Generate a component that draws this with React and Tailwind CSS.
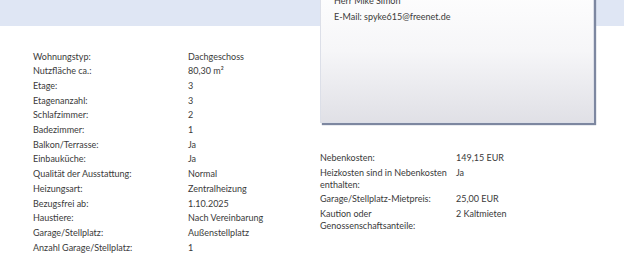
export default function App() {
  const left = [
    ["Wohnungstyp:", "Dachgeschoss"],
    ["Nutzfläche ca.:", "80,30 m²"],
    ["Etage:", "3"],
    ["Etagenanzahl:", "3"],
    ["Schlafzimmer:", "2"],
    ["Badezimmer:", "1"],
    ["Balkon/Terrasse:", "Ja"],
    ["Einbauküche:", "Ja"],
    ["Qualität der Ausstattung:", "Normal"],
    ["Heizungsart:", "Zentralheizung"],
    ["Bezugsfrei ab:", "1.10.2025"],
    ["Haustiere:", "Nach Vereinbarung"],
    ["Garage/Stellplatz:", "Außenstellplatz"],
    ["Anzahl Garage/Stellplatz:", "1"],
  ];
  const right = [
    ["Nebenkosten:", "149,15 EUR"],
    ["Heizkosten sind in Nebenkosten enthalten:", "Ja"],
    ["Garage/Stellplatz-Mietpreis:", "25,00 EUR"],
    ["Kaution oder Genossenschaftsanteile:", "2 Kaltmieten"],
  ];
  return (
    <div
      className="relative w-[624px] h-[260px] bg-white overflow-hidden text-[#3a3a3a] text-[9px]"
      style={{ fontFamily: 'Lato, "Liberation Sans", sans-serif' }}
    >
      <div className="absolute top-0 left-0 right-0 h-[26px] bg-[#dfe6f4]" />
      <div className="relative flex">
        <div className="w-[320px] pl-[33px] pt-[49.5px] flex flex-col">
          {left.map(([k, v]) => (
            <div key={k} className="flex leading-[14.7px]">
              <div className="w-[155px]">{k}</div>
              <div>{v}</div>
            </div>
          ))}
        </div>
        <div className="flex flex-col w-[274px]">
          <div className="mt-[-22px] h-[145px] border border-[#dcdfe8] bg-gradient-to-b from-white via-[#f6f6f8] to-[#e0e0e6] shadow-[2px_2px_1px_#7d87a0] px-[13px] pt-[14px] leading-[16px]">
            <div>Herr Mike Simon</div>
            <div>E-Mail: spyke615@freenet.de</div>
          </div>
          <div className="mt-[28px] flex flex-col">
            {right.map(([k, v]) => (
              <div key={k} className="flex leading-[12px] py-[1.25px]">
                <div className="w-[136px] pr-[4px]">{k}</div>
                <div>{v}</div>
              </div>
            ))}
          </div>
        </div>
      </div>
    </div>
  );
}
